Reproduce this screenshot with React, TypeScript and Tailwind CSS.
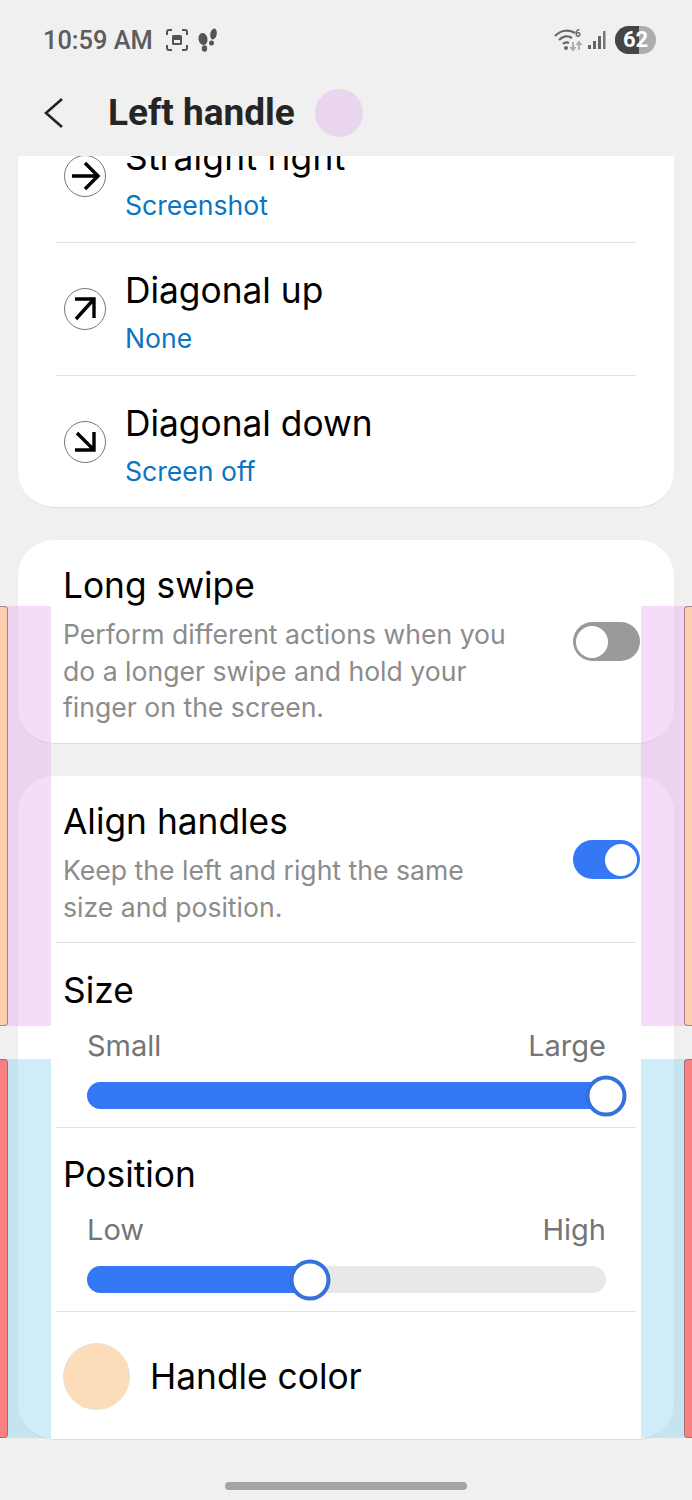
import React from "react";

const sans = "font-['Inter','Noto_Sans',sans-serif]";

function CircleArrow({ d }: { d: string }) {
  return (
    <svg width="44" height="44" viewBox="0 0 44 44" className="shrink-0">
      <circle cx="22" cy="22" r="20.5" fill="none" stroke="#777" strokeWidth="1" />
      <path d={d} fill="none" stroke="#000" strokeWidth="3.4" />
    </svg>
  );
}

function ActionRow({ title, sub, d, divider, h, tracking }: { title: string; sub: string; d: string; divider: boolean; h: string; tracking?: string }) {
  return (
    <div className={`${h} mx-[38px] flex items-center gap-[18px] pl-[7px] ${divider ? "border-b border-[#e2e2e2]" : ""}`}>
      <CircleArrow d={d} />
      <div className="flex flex-col pt-[3px]">
        <span className={`text-[35.3px] leading-[48px] mt-[2px] text-black ${tracking ?? ""}`}>{title}</span>
        <span className="text-[26.6px] leading-[36px] mt-[5px] text-[#0b75c2]">{sub}</span>
      </div>
    </div>
  );
}

function Toggle({ on }: { on: boolean }) {
  return (
    <div className={`w-[67px] h-[39px] rounded-full flex items-center px-[3px] shrink-0 ${on ? "bg-[#3478f6] justify-end" : "bg-[#9a9a9c] justify-start"}`}>
      <div className="w-[32px] h-[32px] rounded-full bg-white" />
    </div>
  );
}

function Slider({ low, high, pct }: { low: string; high: string; pct: number }) {
  return (
    <div className="pl-[31px] pr-[30px]">
      <div className="flex justify-between text-[29px] leading-[36px] text-[#757575]">
        <span>{low}</span>
        <span>{high}</span>
      </div>
      <div className="relative h-[27px] mt-[18px] rounded-full bg-[#e8e8e8]">
        <div className="h-full rounded-full bg-[#3478f6]" style={{ width: `${pct}%` }} />
        <div
          className="absolute top-1/2 -translate-x-1/2 -translate-y-1/2 w-[41px] h-[41px] rounded-full bg-white border-[4px] border-[#3570dc]"
          style={{ left: `${pct}%` }}
        />
      </div>
    </div>
  );
}

function StatusBar() {
  return (
    <div className="h-[80px] flex items-center justify-between pl-[43px] pr-[36px] text-[#5c5c5c]">
      <div className="flex items-center">
        <span className="font-['Roboto',sans-serif] font-medium text-[25.4px]">10:59 AM</span>
        <svg width="24" height="24" viewBox="0 0 24 24" className="ml-[12px]" fill="none" stroke="#555" strokeWidth="2">
          <path d="M2 7V4a2 2 0 0 1 2-2h3M17 2h3a2 2 0 0 1 2 2v3M22 17v3a2 2 0 0 1-2 2h-3M7 22H4a2 2 0 0 1-2-2v-3" />
          <rect x="7" y="7" width="10" height="10" rx="1.5" fill="#555" stroke="none" />
          <rect x="9" y="12" width="6" height="3" fill="#f0f0f0" stroke="none" />
        </svg>
        <svg width="22" height="26" viewBox="0 0 22 26" className="ml-[8px]" fill="#555">
          <ellipse cx="6" cy="12" rx="4.5" ry="6" transform="rotate(-10 6 12)" />
          <ellipse cx="7.5" cy="21.5" rx="2.7" ry="3.2" />
          <ellipse cx="16.5" cy="7" rx="3.2" ry="5.5" transform="rotate(12 16.5 7)" />
          <circle cx="14.5" cy="16" r="2.5" />
        </svg>
      </div>
      <div className="flex items-center">
        <svg width="30" height="24" viewBox="0 0 30 24" fill="none" stroke="#666" strokeWidth="2.2">
          <path d="M1 8C7 2 15 1 21 5M5 12C9 8 14 7 18 10M9 16C11 14 13 14 15 15" />
          <circle cx="12" cy="20" r="2" fill="#666" stroke="none" />
          <path d="M19 14v8M16.5 19l2.5 3 2.5-3M25 22v-8M22.5 17l2.5-3 2.5 3" stroke="#aaa" strokeWidth="1.8" />
          <text x="21" y="9" fontSize="10" fontFamily="Roboto" fill="#666" stroke="none" fontWeight="700">6</text>
        </svg>
        <svg width="20" height="20" viewBox="0 0 20 20" className="ml-[3px]" fill="#666">
          <rect x="1" y="15" width="3" height="4" />
          <rect x="6" y="11" width="3" height="8" />
          <rect x="11" y="6" width="3" height="13" />
          <rect x="16" y="1" width="2.5" height="18" fill="#777" />
        </svg>
        <div className="relative ml-[8px] w-[41px] h-[28px] rounded-full overflow-hidden bg-[#adadad] flex items-center justify-center">
          <div className="absolute left-0 top-0 bottom-0 w-[24px] bg-[#454545]" />
          <span className="relative font-['Roboto',sans-serif] font-bold text-[22px] leading-none text-white">62</span>
        </div>
      </div>
    </div>
  );
}

function Overlay({ top, h, tint, handle, border }: { top: string; h: string; tint: string; handle: string; border: string }) {
  return (
    <div className={`absolute left-0 right-0 flex justify-between pointer-events-none ${top} ${h}`}>
      <div className={`w-[51px] relative ${tint}`}>
        <div className={`absolute left-0 top-0 bottom-0 w-[8px] rounded-r-[4px] border-y border-r ${handle} ${border}`} />
      </div>
      <div className={`w-[51px] relative ${tint}`}>
        <div className={`absolute right-0 top-0 bottom-0 w-[8px] rounded-l-[4px] border-y border-l ${handle} ${border}`} />
      </div>
    </div>
  );
}

export default function App() {
  return (
    <div className={`relative w-[692px] h-[1500px] overflow-hidden bg-[#f0f0f0] ${sans}`}>
      <StatusBar />
      <div className="h-[76px] -mt-[5px] flex items-center pl-[43px] relative">
        <svg width="20" height="32" viewBox="0 0 20 32" fill="none" stroke="#222" strokeWidth="2.6">
          <path d="M19 2L3 16L19 30" />
        </svg>
        <span className="ml-[45px] font-['Roboto',sans-serif] font-bold text-[37px] text-[#252525]">Left handle</span>
        <div className="ml-[20px] w-[48px] h-[48px] rounded-full bg-[#e9d5ee]" />
      </div>
      <div className="h-[1344px] overflow-hidden px-[18px] mt-[5px]">
        <div className="-mt-[46px] flex flex-col gap-[32px]">
          <div className="bg-white rounded-b-[36px] border-b border-[#dedede]">
            <ActionRow h="h-[133px]" title="Straight right" sub="Screenshot" d="M9 22H35M22 9L35 22L22 35" divider tracking="tracking-[0.3px]" />
            <ActionRow h="h-[133px]" title="Diagonal up" sub="None" d="M13 32L31 12M12 12H31V31" divider />
            <ActionRow h="h-[131px]" title="Diagonal down" sub="Screen off" d="M14 13L30 29M12 30H31V12" divider={false} />
          </div>
          <div className="bg-white rounded-[36px] border-b border-[#dedede] h-[204px] pt-[22px] pl-[45px] pr-[46px] flex justify-between">
            <div>
              <div className="pt-[1px] text-[35.3px] leading-[46px] text-black">Long swipe</div>
              <div className="mt-[7px] text-[26.6px] leading-[36.5px] text-[#8c8c8c] w-[450px]">
                Perform different actions when you do a longer swipe and hold your finger on the screen.
              </div>
            </div>
            <div className="pt-[60px] -mr-[12px]">
              <Toggle on={false} />
            </div>
          </div>
          <div className="bg-white rounded-[36px] border-b border-[#dedede] h-[664px]">
            <div className="h-[167px] mx-[38px] border-b border-[#e2e2e2] pt-[22px] pl-[7px] flex justify-between">
              <div>
                <div className="pt-[1px] text-[35.3px] leading-[46px] text-black">Align handles</div>
                <div className="mt-[7px] text-[26.6px] leading-[36.5px] text-[#8c8c8c] w-[420px]">
                  Keep the left and right the same size and position.
                </div>
              </div>
              <div className="pt-[42px] -mr-[4px]">
                <Toggle on />
              </div>
            </div>
            <div className="h-[185px] mx-[38px] border-b border-[#e2e2e2] pt-[25px]">
              <div className="text-[35.3px] leading-[46px] text-black pl-[7px]">Size</div>
              <div className="mt-[14px]">
                <Slider low="Small" high="Large" pct={100} />
              </div>
            </div>
            <div className="h-[184px] mx-[38px] border-b border-[#e2e2e2] pt-[24px]">
              <div className="text-[35.3px] leading-[46px] text-black pl-[7px]">Position</div>
              <div className="mt-[14px]">
                <Slider low="Low" high="High" pct={43} />
              </div>
            </div>
            <div className="h-[128px] px-[45px] flex items-center gap-[20px]">
              <div className="w-[67px] h-[67px] rounded-full bg-[#fcdcb9] border border-[#e9e1d8]" />
              <span className="mt-[3px] text-[35.3px] text-black">Handle color</span>
            </div>
          </div>
        </div>
      </div>
      <Overlay top="top-[606px]" h="h-[420px]" tint="bg-[#e6aaf0]/40" handle="bg-[#fccfae]" border="border-[#a8808a]" />
      <Overlay top="top-[1059px]" h="h-[379px]" tint="bg-[#86d2ee]/40" handle="bg-[#f88080]" border="border-[#a86a70]" />
      <div className="absolute left-[225px] top-[1482px] w-[242px] h-[8px] rounded-full bg-[#a3a3a3]" />
    </div>
  );
}
